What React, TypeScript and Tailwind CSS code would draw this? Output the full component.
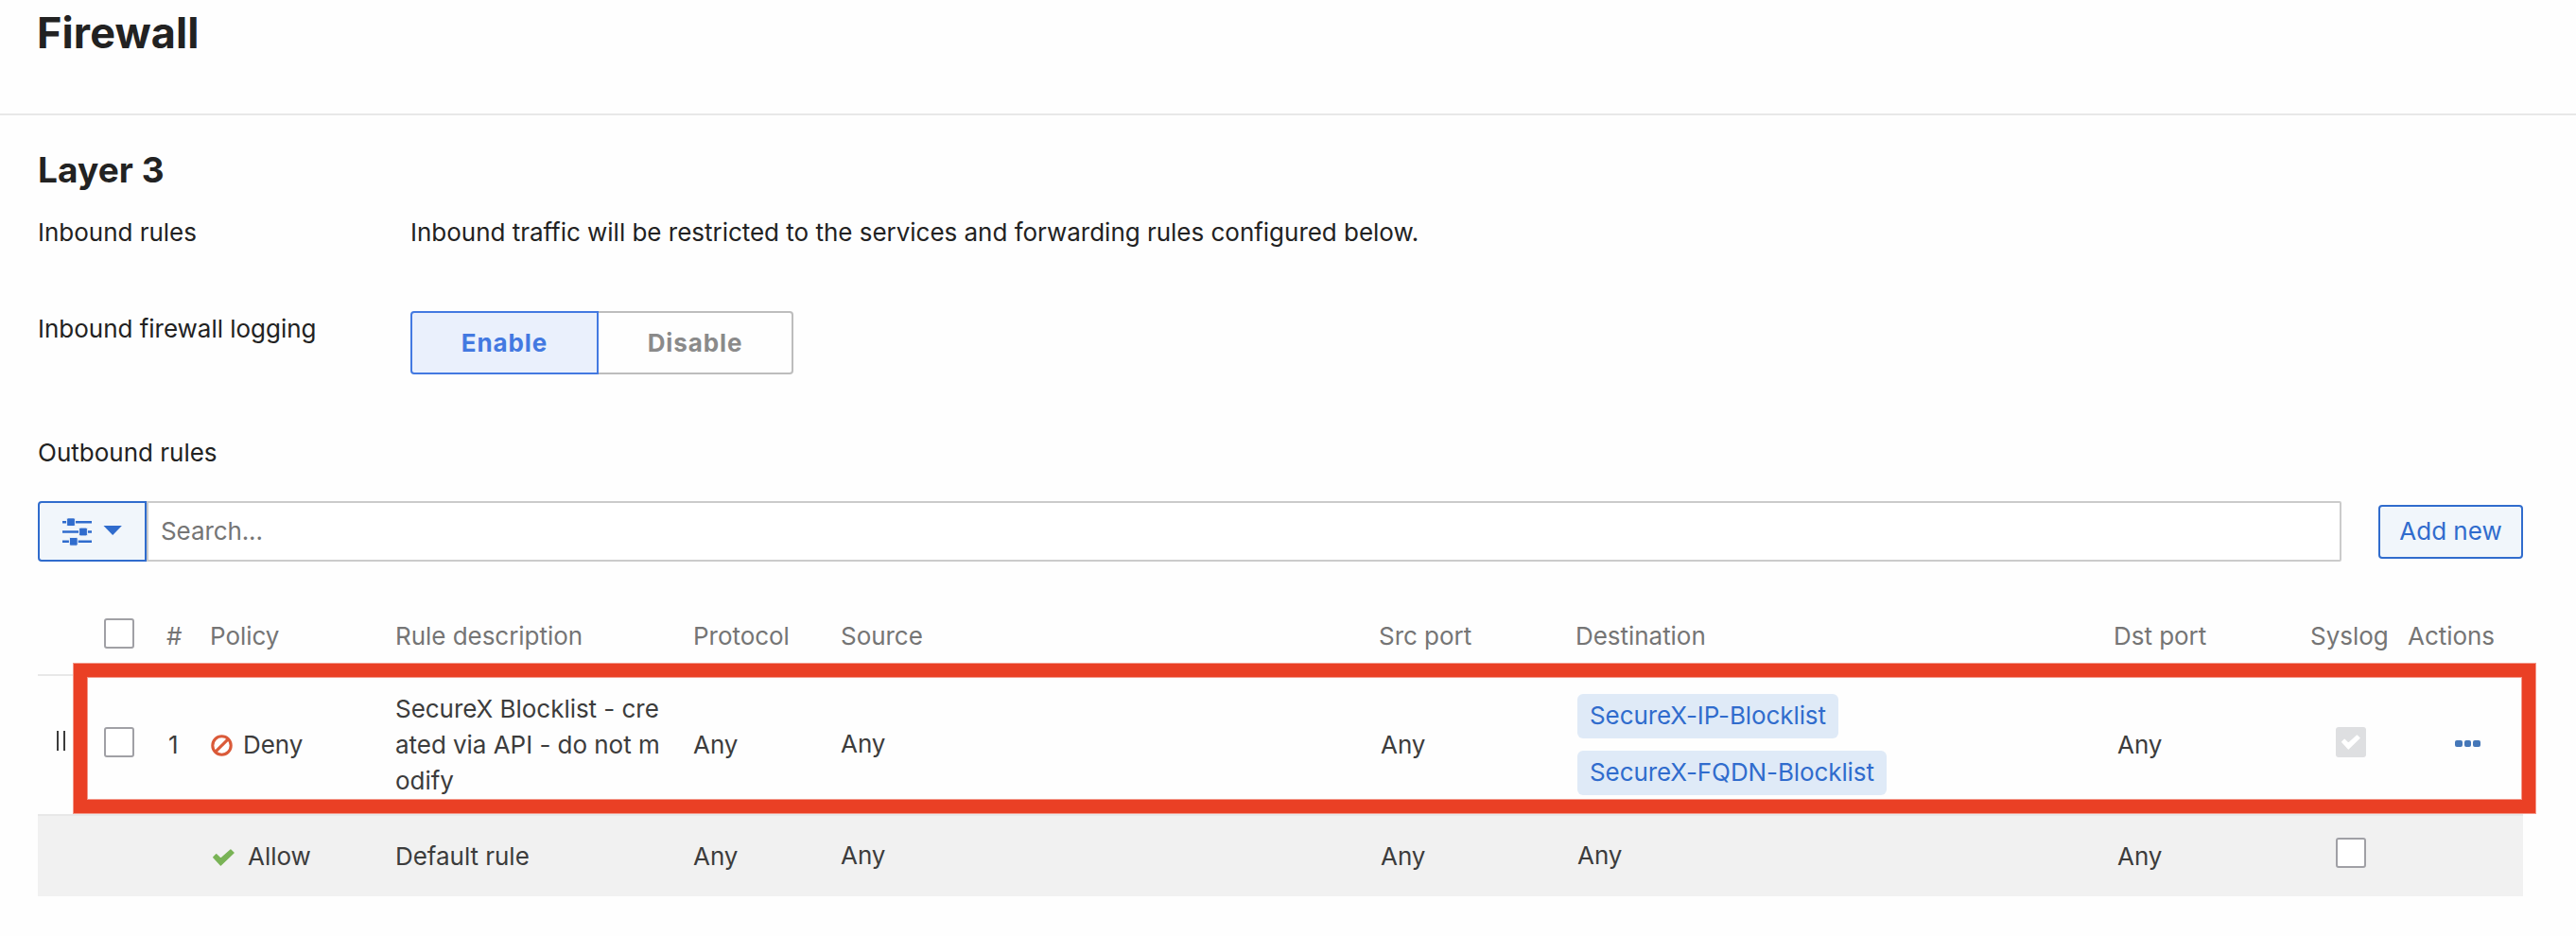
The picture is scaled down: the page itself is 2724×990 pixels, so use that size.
import type { ReactNode } from "react";

const GRID =
  "grid grid-cols-[70px_66px_46px_196px_315px_156px_569px_208px_569px_208px_103px_122px] tracking-[-0.04px]";

function CheckMark({ className }: { className: string }) {
  return (
    <svg viewBox="0 0 23 18" className={className} fill="currentColor" stroke="currentColor" strokeWidth="1.4" strokeLinejoin="round">
      <path d="M.8 8.7 3.7 5.8 8.4 10.3 18.9 1 22 4 8.4 17.1z" />
    </svg>
  );
}

function Checkbox({ checked = false }: { checked?: boolean }) {
  if (checked) {
    return (
      <span className="flex h-8 w-8 items-center justify-center rounded-[3px] bg-[#dedfe1] text-white">
        <CheckMark className="h-4 w-5" />
      </span>
    );
  }
  return <span className="block h-8 w-8 rounded-[3px] border-2 border-[#a0a0a5] bg-white" />;
}

function DenyIcon() {
  return (
    <svg viewBox="0 0 23 23" className="h-[23px] w-[23px]" fill="none" stroke="#da5a39" strokeWidth="3.1">
      <circle cx="11.5" cy="11.5" r="9.7" />
      <path d="M4.8 18.2 18.2 4.8" />
    </svg>
  );
}

function Tag({ children }: { children: ReactNode }) {
  return (
    <span className="flex h-[47px] items-center rounded-md bg-[#dfeaf7] px-[13px] pb-px tracking-[-0.1px] text-[#306ccd]">
      {children}
    </span>
  );
}

export default function App() {
  return (
    <div className="h-[990px] w-[2724px] overflow-hidden bg-[#fefefe] font-['Inter',sans-serif] text-[26px] leading-[38px] text-[#222]">
      <header className="h-[122px] border-b-2 border-[#e8e8e8] px-[39px] pt-[7px]">
        <h1 className="text-[45px] leading-[55px] font-bold tracking-[0.1px]">Firewall</h1>
      </header>
      <main className="pl-10">
        <h2 className="pt-9 text-[37px] leading-[44px] font-bold tracking-[0.1px]">Layer 3</h2>
        <div className="mt-[25px] flex tracking-[-0.02px]">
          <div className="w-[394px]">Inbound rules</div>
          <div>Inbound traffic will be restricted to the services and forwarding rules configured below.</div>
        </div>
        <div className="mt-16 flex">
          <div className="w-[394px] tracking-[-0.02px]">Inbound firewall logging</div>
          <div className="flex h-[67px] font-bold tracking-[0.9px]">
            <button className="w-[199px] rounded-l-[4px] border-2 border-[#4379e1] bg-[#eaf0fc] text-[#4379e1]">Enable</button>
            <button className="w-[206px] rounded-r-[4px] border-2 border-l-0 border-[#bdbdbd] text-[#8a8a8a]">Disable</button>
          </div>
        </div>
        <div className="mt-16">Outbound rules</div>
        <div className="mt-8 flex items-center">
          <button className="flex h-16 w-[115px] items-center rounded-l-[4px] border-2 border-[#306ccd] bg-[#f1f6fb] pt-[2px] pl-6">
            <svg viewBox="0 0 64 30" className="h-[30px] w-16" fill="#306ccd">
              <path d="M0 3h31v2.4H0zM0 13.3h31v2.4H0zM0 23.6h31V26H0z" />
              <g stroke="#f1f6fb" strokeWidth="1">
                <rect x="4.6" y="-.2" width="8.8" height="8.8" rx="1.4" />
                <rect x="17.6" y="10.1" width="8.8" height="8.8" rx="1.4" />
                <rect x="7.4" y="20.4" width="8.8" height="8.8" rx="1.4" />
              </g>
              <path d="M43.5 8h19.4l-9.7 10z" />
            </svg>
          </button>
          <div className="h-16 w-[2321px] rounded-r-[2px] border-2 border-[#cbcbcb] bg-white pt-[11px] pl-[13px] tracking-[-0.1px] text-[#757575]">
            Search...
          </div>
          <button className="ml-[39px] h-[57px] w-[153px] rounded-[4px] border-2 border-[#306ccd] bg-[#f1f6fb] text-[#306ccd]">
            Add new
          </button>
        </div>

        <div className="relative w-[2628px]">
          <div className={`${GRID} h-[119px] pt-[60px] text-[#757575]`}>
            <div />
            <Checkbox />
            <div>#</div>
            <div>Policy</div>
            <div>Rule description</div>
            <div>Protocol</div>
            <div>Source</div>
            <div>Src port</div>
            <div>Destination</div>
            <div>Dst port</div>
            <div>Syslog</div>
            <div>Actions</div>
          </div>
          <div className={`${GRID} h-[148px] items-center border-t-2 border-[#e8e8e8] text-[#3c3c3c]`}>
            <div className="-mt-[9px] ml-5 h-[21px] w-[9px] border-x-2 border-[#3c3c3c]" />
            <div className="-mt-1.5">
              <Checkbox />
            </div>
            <div className="pl-[2px]">1</div>
            <div className="flex items-center gap-[11px] pl-px">
              <DenyIcon />
              <span>Deny</span>
            </div>
            <div className="w-[288px] break-all">SecureX Blocklist - created via API - do not modify</div>
            <div>Any</div>
            <div className="pb-[2px]">Any</div>
            <div className="pl-[2px]">Any</div>
            <div className="flex flex-col items-start gap-[13px] pb-px pl-[2px]">
              <Tag>SecureX-IP-Blocklist</Tag>
              <Tag>SecureX-FQDN-Blocklist</Tag>
            </div>
            <div className="pl-[4px]">Any</div>
            <div className="-mt-1.5 pl-[27px]">
              <Checkbox checked />
            </div>
            <div className="-mt-[3px] flex gap-[2px] pl-[50px]">
              <i className="h-[7px] w-[7.5px] rounded-[2px] bg-[#4577b8]" />
              <i className="h-[7px] w-[7.5px] rounded-[2px] bg-[#4577b8]" />
              <i className="h-[7px] w-[7.5px] rounded-[2px] bg-[#4577b8]" />
            </div>
          </div>
          <div className={`${GRID} h-[87px] items-center border-t-2 border-[#e8e8e8] bg-[#f1f1f1] text-[#3c3c3c]`}>
            <div />
            <div />
            <div />
            <div className="flex items-center gap-[14px] pl-[3px]">
              <CheckMark className="mt-[2px] h-[18px] w-[23px] text-[#79b356]" />
              <span>Allow</span>
            </div>
            <div>Default rule</div>
            <div>Any</div>
            <div className="pb-[2px]">Any</div>
            <div className="pl-[2px]">Any</div>
            <div className="pb-[2px] pl-[2px]">Any</div>
            <div className="pl-[4px]">Any</div>
            <div className="-mt-[7px] pl-[27px]">
              <Checkbox />
            </div>
            <div />
          </div>
          <div className="pointer-events-none absolute top-[108px] left-[38px] h-[158px] w-[2603px] border-[14px] border-[#ea4025] shadow-[0_0_0_1px_#f3988a,inset_0_0_0_1px_#f3988a]" />
        </div>
      </main>
    </div>
  );
}
